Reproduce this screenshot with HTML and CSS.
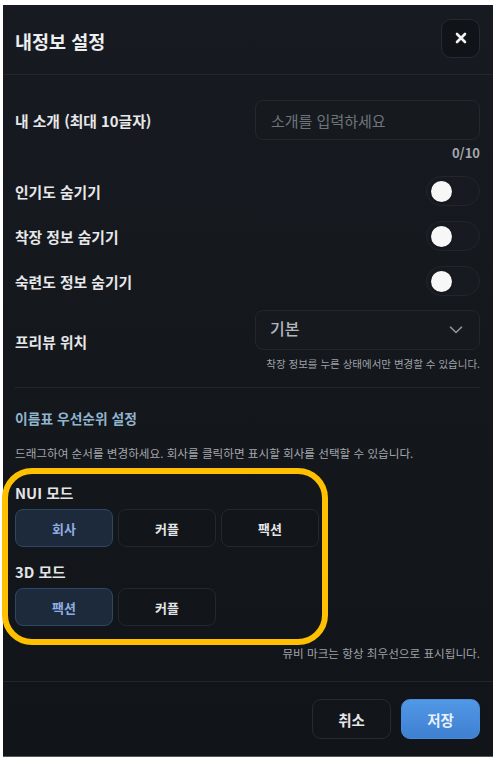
FILE: index.html
```html
<!DOCTYPE html>
<html lang="ko">

<head>
  <meta charset="UTF-8" />
  <meta name="viewport" content="width=device-width, initial-scale=1.0" />
  <title>내정보 설정</title>
  <link rel="stylesheet" href="styles.css">
</head>

<body>
  <div class="modal">

    <div class="modal-header">
      <h1 class="modal-title">내정보 설정</h1>
      <button class="close-button" aria-label="닫기">
        <svg width="12" height="12" viewBox="0 0 12 12">
          <path d="M2 2 L10 10 M10 2 L2 10" stroke="#f2f2f2" stroke-width="2.6" stroke-linecap="round" />
        </svg>
      </button>
    </div>

    <div class="modal-body">
      <div class="setting-row intro-row">
        <span class="setting-label">내 소개 (최대 10글자)</span>
        <input class="text-input" type="text" placeholder="소개를 입력하세요" />
      </div>
      <p class="counter">0/10</p>

      <div class="toggle-list">
        <div class="setting-row">
          <span class="setting-label">인기도 숨기기</span>
          <span class="toggle"><span class="toggle-knob"></span></span>
        </div>
        <div class="setting-row">
          <span class="setting-label">착장 정보 숨기기</span>
          <span class="toggle"><span class="toggle-knob"></span></span>
        </div>
        <div class="setting-row">
          <span class="setting-label">숙련도 정보 숨기기</span>
          <span class="toggle"><span class="toggle-knob"></span></span>
        </div>
      </div>

      <div class="setting-row preview-row">
        <span class="setting-label">프리뷰 위치</span>
        <div class="preview-control">
          <div class="select-box">
            <span>기본</span>
            <svg width="14" height="8" viewBox="0 0 14 8">
              <path d="M1.5 1.2 L7 6.5 L12.5 1.2" fill="none" stroke="#8a8f97" stroke-width="1.6" stroke-linecap="round" stroke-linejoin="round" />
            </svg>
          </div>
          <p class="helper-text">착장 정보를 누른 상태에서만 변경할 수 있습니다.</p>
        </div>
      </div>

      <div class="divider"></div>

      <h2 class="section-title">이름표 우선순위 설정</h2>
      <p class="section-desc">드래그하여 순서를 변경하세요. 회사를 클릭하면 표시할 회사를 선택할 수 있습니다.</p>

      <h3 class="mode-title">NUI 모드</h3>
      <div class="chip-row">
        <button class="chip chip-active">회사</button>
        <button class="chip">커플</button>
        <button class="chip">팩션</button>
      </div>

      <h3 class="mode-title mode-title-3d">3D 모드</h3>
      <div class="chip-row">
        <button class="chip chip-active">팩션</button>
        <button class="chip">커플</button>
      </div>

      <p class="note">뮤비 마크는 항상 최우선으로 표시됩니다.</p>
    </div>

    <div class="modal-footer">
      <button class="footer-button cancel-button">취소</button>
      <button class="footer-button save-button">저장</button>
    </div>

  </div>

  <div class="highlight"></div>
</body>

</html>
```

FILE: styles.css
```css
/* Base Reset */
* {
  margin: 0;
  padding: 0;
  box-sizing: border-box;
}

body {
  background-color: #fff;
  font-family: 'Noto Sans CJK KR', 'Noto Sans', sans-serif;
  color: #e9eaec;
  padding: 5px 3px 3px 3px;
  position: relative;
}

/* Modal */
.modal {
  width: 490px;
  height: 752px;
  background: linear-gradient(180deg, #171b21 0%, #14171c 50%, #111418 100%);
  display: flex;
  flex-direction: column;
  border-bottom: 1px solid #55585c;
}

.modal-header {
  height: 70px;
  padding: 0 13px 0 12px;
  display: flex;
  align-items: center;
  justify-content: space-between;
  border-bottom: 1px solid #23272d;
}

.modal-title {
  font-size: 18.5px;
  font-weight: 700;
  color: #eceef0;
  margin-top: 2px;
}

.close-button {
  width: 39px;
  height: 39px;
  border-radius: 10px;
  border: 1px solid #262a31;
  background-color: #101317;
  display: flex;
  align-items: center;
  justify-content: center;
  margin-top: -3px;
}

/* Body */
.modal-body {
  flex: 1;
  padding: 25px 13px 0 12px;
  display: flex;
  flex-direction: column;
}

.setting-row {
  display: flex;
  align-items: center;
  justify-content: space-between;
}

.setting-label {
  font-size: 14.8px;
  font-weight: 700;
  color: #e6e7e9;
}

.text-input {
  width: 225px;
  height: 40px;
  border-radius: 8px;
  border: 1px solid #23272e;
  background-color: #161a1f;
  padding: 0 15px;
  font-family: inherit;
  font-size: 15px;
  color: #ddd;
  outline: none;
}

.text-input::placeholder {
  color: #6f747b;
}

.counter {
  text-align: right;
  font-size: 13px;
  font-weight: 700;
  color: #a3a7ad;
  line-height: 16px;
  margin-top: 5px;
}

/* Toggles */
.toggle-list {
  display: flex;
  flex-direction: column;
  gap: 15px;
  margin-top: 15px;
}

.toggle-list .setting-row {
  height: 30px;
}

.toggle {
  width: 54px;
  height: 30px;
  border-radius: 15px;
  background-color: #171b21;
  border: 1px solid #22262c;
  display: flex;
  align-items: center;
  padding-left: 4px;
}

.toggle-knob {
  width: 21px;
  height: 21px;
  border-radius: 50%;
  background-color: #f7f7f8;
  box-shadow: 0 1px 3px rgba(0, 0, 0, 0.4);
}

/* Preview position */
.preview-row {
  margin-top: 14px;
}

.preview-control {
  width: 225px;
}

.select-box {
  height: 40px;
  border-radius: 8px;
  border: 1px solid #22262d;
  background-color: #161a1f;
  padding: 0 16px 0 14px;
  display: flex;
  align-items: center;
  justify-content: space-between;
  font-size: 16px;
  color: #b3b6bb;
  font-weight: 500;
}

.select-box span {
  margin-top: -4px;
}

.helper-text {
  font-size: 10.5px;
  color: #9ea2a8;
  text-align: right;
  line-height: 16px;
  margin-top: 6px;
}

.divider {
  height: 1px;
  background-color: #23272d;
  margin-top: 15px;
}

/* Priority section */
.section-title {
  font-size: 13.8px;
  font-weight: 700;
  color: #8fb4cc;
  line-height: 18px;
  margin-top: 21px;
}

.section-desc {
  font-size: 11.6px;
  color: #a3a7ad;
  line-height: 16px;
  margin-top: 18px;
}

.mode-title {
  font-size: 14.8px;
  font-weight: 700;
  color: #e3e4e6;
  line-height: 20px;
  margin-top: 22px;
}

.mode-title-3d {
  margin-top: 15px;
}

.chip-row {
  display: flex;
  gap: 5px;
  margin-top: 6px;
}

.chip {
  width: 98px;
  height: 38px;
  border-radius: 8px;
  border: 1px solid #23272e;
  background-color: #121519;
  color: #e4e5e7;
  font-family: inherit;
  font-size: 13px;
  font-weight: 700;
}

.chip-active {
  background-color: #1d2a3b;
  border-color: #2d4767;
  color: #8eaee0;
}

.note {
  font-size: 11.6px;
  color: #9ea2a8;
  text-align: right;
  line-height: 16px;
  margin-top: 19px;
}

/* Footer */
.modal-footer {
  height: 75px;
  border-top: 1px solid #22262c;
  display: flex;
  justify-content: flex-end;
  align-items: center;
  gap: 10px;
  padding: 0 13px 0 12px;
}

.footer-button {
  width: 79px;
  height: 40px;
  border-radius: 9px;
  font-family: inherit;
  font-size: 14.5px;
  font-weight: 700;
}

.cancel-button {
  background-color: #121519;
  border: 1px solid #262a31;
  color: #e6e7e9;
}

.save-button {
  background: linear-gradient(180deg, #5198e6 0%, #3f80d0 100%);
  border: 1px solid #4a8cdb;
  color: #e8f0fb;
}

/* Annotation overlay */
.highlight {
  position: absolute;
  left: 2px;
  top: 468px;
  width: 326px;
  height: 177px;
  border: 6px solid #ffc000;
  border-radius: 30px;
  pointer-events: none;
}
```
